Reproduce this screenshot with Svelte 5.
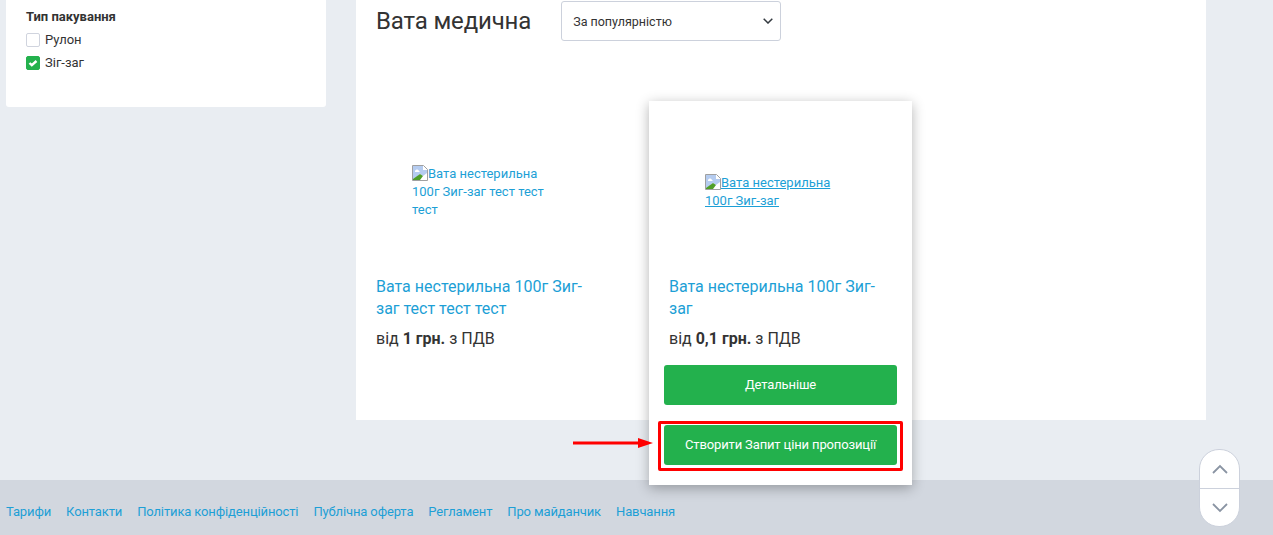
<script lang="ts">
	const links = ['Тарифи', 'Контакти', 'Політика конфіденційності', 'Публічна оферта', 'Регламент', 'Про майданчик', 'Навчання'];
	const products = [
		{ title: 'Вата нестерильна 100г Зиг-заг тест тест тест', price: '1', active: false },
		{ title: 'Вата нестерильна 100г Зиг-заг', price: '0,1', active: true }
	];
</script>

<div class="page">
	<div class="content">
		<aside class="sidebar">
			<div class="filter-title">Тип пакування</div>
			<label class="check">
				<span class="box"></span>
				Рулон
			</label>
			<label class="check">
				<span class="box checked">
					<svg width="10" height="8" viewBox="0 0 10 8" fill="none" stroke="#fff" stroke-width="2.4">
						<path d="M1.5 4l2.3 2.2L8.5 2" />
					</svg>
				</span>
				Зіг-заг
			</label>
		</aside>

		<main class="main">
			<div class="head">
				<h1>Вата медична</h1>
				<div class="select">
					За популярністю
					<svg width="10" height="6" viewBox="0 0 10 6" fill="none" stroke="#343a40" stroke-width="1.5">
						<path d="M.7.7L5 5l4.3-4.3" />
					</svg>
				</div>
			</div>

			<div class="grid">
				{#each products as p}
					<div class="card" class:active={p.active}>
						<div class="thumb">
							<a href="#top" class="alt">
								<svg class="broken" width="16" height="16" viewBox="0 0 16 16">
									<path d="M.5.5h11l4 4v11H.5z" fill="#fff" stroke="#a0a0a0" />
									<path d="M1 1h10v4h4v3l-4 3-3-2-7 6z" fill="#b5ccf0" />
									<path d="M3 6c1-2 3-2 4 0l1 1H3z" fill="#fff" />
									<path d="M1 15v-1l7-5 3 2-3 4z" fill="#4f9e28" />
								</svg>{p.title}
							</a>
						</div>
						<a href="#top" class="title">{p.title}</a>
						<div class="price">від <b>{p.price} грн.</b> з ПДВ</div>
						{#if p.active}
							<button class="btn">Детальніше</button>
							<div class="marked">
								<button class="btn">Створити Запит ціни пропозиції</button>
								<svg class="arrow" width="81" height="12" viewBox="0 0 81 12">
									<path d="M0 6h67" stroke="#f00" stroke-width="3" />
									<path d="M65 1l15 5-15 5z" fill="#f00" />
								</svg>
							</div>
						{/if}
					</div>
				{/each}
			</div>
		</main>
	</div>

	<footer class="footer">
		{#each links as link}
			<a href="#top">{link}</a>
		{/each}
	</footer>

	<div class="scroller">
		<button aria-label="Вгору">
			<svg width="16" height="10" viewBox="0 0 16 10" fill="none" stroke="#8a94a3" stroke-width="1.8">
				<path d="M1 9l7-7 7 7" />
			</svg>
		</button>
		<button aria-label="Вниз">
			<svg width="16" height="10" viewBox="0 0 16 10" fill="none" stroke="#8a94a3" stroke-width="1.8">
				<path d="M1 1l7 7 7-7" />
			</svg>
		</button>
	</div>
</div>

<style>
	:global(body) {
		margin: 0;
		background: #e9edf2;
		font-family: Roboto, 'Liberation Sans', sans-serif;
		color: #333;
	}

	.page {
		position: relative;
		height: 535px;
		overflow: hidden;
	}

	.content {
		display: flex;
		gap: 30px;
		height: 480px;
		padding-left: 6px;
	}

	.sidebar {
		box-sizing: border-box;
		width: 320px;
		height: 107px;
		padding: 9px 20px 0;
		background: #fff;
		border-radius: 0 0 3px 3px;
	}

	.filter-title {
		font-size: 13px;
		font-weight: 700;
		line-height: 16px;
		margin-bottom: 3px;
	}

	.check {
		display: flex;
		align-items: center;
		gap: 5px;
		height: 23px;
		font-size: 13px;
	}

	.box {
		box-sizing: border-box;
		display: flex;
		align-items: center;
		justify-content: center;
		width: 14px;
		height: 14px;
		border: 1px solid #d0d4de;
		border-radius: 2px;
		background: #fff;
	}

	.box.checked {
		background: #23b14d;
		border-color: #23b14d;
	}

	.main {
		box-sizing: border-box;
		width: 850px;
		height: 420px;
		padding: 0 20px;
		background: #fff;
	}

	.head {
		display: flex;
		align-items: center;
		gap: 30px;
		height: 42px;
	}

	h1 {
		margin: 0;
		font-size: 24px;
		font-weight: 400;
		line-height: 42px;
		letter-spacing: -0.15px;
	}

	.select {
		box-sizing: border-box;
		display: flex;
		align-items: center;
		justify-content: space-between;
		width: 220px;
		height: 40px;
		padding: 0 7px 0 11px;
		border: 1px solid #ccd1dc;
		border-radius: 3px;
		font-size: 12.5px;
	}

	.grid {
		display: grid;
		grid-template-columns: 263px 263px;
		align-items: start;
		gap: 30px;
		margin: 59px 0 0 -20px;
	}

	.card {
		box-sizing: border-box;
		padding: 20px;
		position: relative;
	}

	.card.active {
		height: 384px;
		background: #fff;
		box-shadow: 0 3px 12px rgba(0, 0, 0, 0.3);
	}

	.thumb {
		display: flex;
		align-items: center;
		height: 138px;
		padding: 2px 0 0 36px;
		margin-bottom: 15px;
	}

	.alt {
		display: block;
		width: 140px;
		font-size: 13px;
		line-height: 18px;
		color: #1d9fd6;
		text-decoration: none;
	}

	.active .alt {
		text-decoration: underline;
	}

	.broken {
		vertical-align: -3px;
	}

	.title {
		display: block;
		font-size: 16px;
		line-height: 22px;
		color: #1d9fd6;
		text-decoration: none;
	}

	.price {
		margin-top: 8px;
		font-size: 16px;
		line-height: 22px;
	}

	.btn {
		display: block;
		width: 233px;
		height: 40px;
		margin: 0 -5px;
		padding: 0 0 2px;
		border: 0;
		border-radius: 3px;
		background: #23b14d;
		color: #fff;
		font-family: inherit;
		font-size: 13px;
		font-weight: 400;
		letter-spacing: -0.13px;
	}

	.card > .btn {
		margin-top: 15px;
	}

	.marked {
		position: relative;
		margin-top: 20px;
	}

	.marked::before {
		content: '';
		position: absolute;
		top: -4px;
		left: -11px;
		width: 245px;
		height: 50px;
		box-sizing: border-box;
		border: 3px solid #f00;
		border-radius: 2px;
	}

	.marked .btn {
		position: relative;
	}

	.arrow {
		position: absolute;
		top: 12px;
		left: -96px;
	}

	.footer {
		display: flex;
		align-items: center;
		gap: 15px;
		height: 55px;
		padding: 7px 0 0 6px;
		box-sizing: border-box;
		background: #d2d7df;
	}

	.footer a {
		font-size: 13px;
		letter-spacing: -0.13px;
		color: #1d9fd6;
		text-decoration: none;
	}

	.scroller {
		position: absolute;
		left: 1199px;
		top: 449px;
		box-sizing: border-box;
		width: 41px;
		height: 78px;
		border: 1px solid #ccd1dc;
		border-radius: 20px;
		background: #fff;
		overflow: hidden;
	}

	.scroller button {
		display: flex;
		align-items: center;
		justify-content: center;
		width: 100%;
		height: 38px;
		padding: 0;
		border: 0;
		background: none;
	}

	.scroller button + button {
		border-top: 1px solid #ccd1dc;
	}
</style>
